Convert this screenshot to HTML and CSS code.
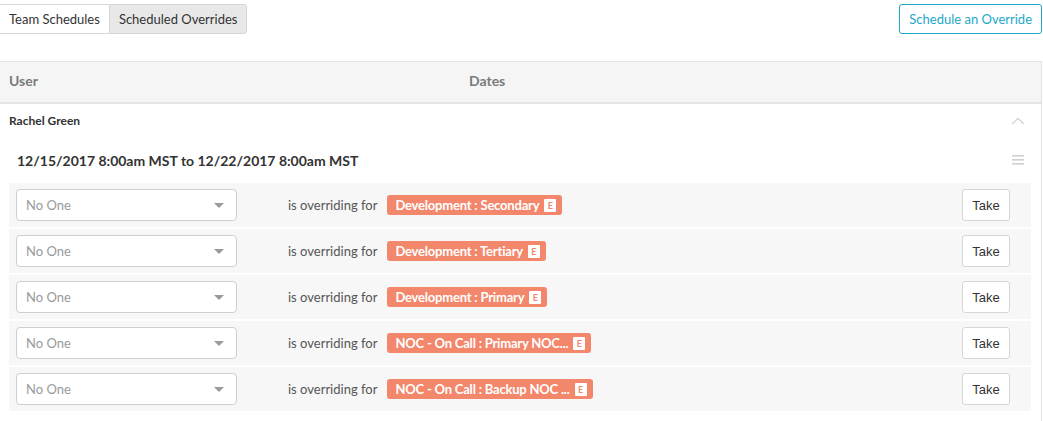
FILE: index.html
```html
<!DOCTYPE html>
<html lang="en">

<head>
    <meta charset="UTF-8">
    <meta name="viewport" content="width=device-width, initial-scale=1.0">
    <title>Scheduled Overrides</title>
    <link rel="stylesheet" href="styles.css">
</head>

<body>
    <div class="toolbar">
        <div class="tabs">
            <button class="tab">Team Schedules</button>
            <button class="tab active">Scheduled Overrides</button>
        </div>
        <button class="btn-outline">Schedule an Override</button>
    </div>

    <div class="panel">
        <div class="panel-head">
            <div class="col-user">User</div>
            <div class="col-dates">Dates</div>
        </div>

        <div class="user-row">
            <span class="user-name">Rachel Green</span>
            <svg class="chevron" width="14" height="8" viewBox="0 0 14 8">
                <path d="M1 7 L7 1.5 L13 7" fill="none" stroke="#d6d6d6" stroke-width="1.6"/>
            </svg>
        </div>

        <div class="range-row">
            <span class="range">12/15/2017 8:00am MST to 12/22/2017 8:00am MST</span>
            <svg class="menu" width="12" height="10" viewBox="0 0 12 10">
                <rect x="0" y="0" width="12" height="1.6" fill="#d0d0d0"/>
                <rect x="0" y="4" width="12" height="1.6" fill="#d0d0d0"/>
                <rect x="0" y="8" width="12" height="1.6" fill="#d0d0d0"/>
            </svg>
        </div>

        <ul class="overrides" id="overrides"></ul>
    </div>

    <script>
        const schedules = [
            'Development : Secondary',
            'Development : Tertiary',
            'Development : Primary',
            'NOC - On Call : Primary NOC...',
            'NOC - On Call : Backup NOC ...'
        ];
        const list = document.getElementById('overrides');
        for (let i = 0; i < schedules.length; i++) {
            const li = document.createElement('li');
            li.className = 'override';
            li.innerHTML =
                '<div class="select"><span>No One</span><span class="caret"></span></div>' +
                '<span class="label">is overriding for</span>' +
                '<span class="badge">' + schedules[i] + ' <span class="badge-e">E</span></span>' +
                '<button class="take">Take</button>';
            list.appendChild(li);
        }
    </script>
</body>

</html>
```

FILE: styles.css
```css
body {
    margin: 0;
    font-family: Lato, "Open Sans", sans-serif;
    background-color: #fff;
    color: #333;
}

button {
    font-family: inherit;
    cursor: pointer;
}

.toolbar {
    display: flex;
    justify-content: space-between;
    align-items: flex-start;
    padding: 4px 1px 0 0;
    height: 57px;
}

.tabs {
    display: flex;
}

.tab {
    height: 30px;
    padding: 0 9px;
    font-size: 13px;
    color: #333;
    background-color: #fff;
    border: 1px solid #d6d6d6;
    border-radius: 0;
}

.tab:first-child {
    border-left: none;
    border-right: none;
}

.tab.active {
    background-color: #e8e8e8;
    border-radius: 0 3px 3px 0;
}

.btn-outline {
    height: 30px;
    padding: 0 9px;
    font-size: 13px;
    color: #1ea7c9;
    background-color: #fff;
    border: 1px solid #1ea7c9;
    border-radius: 3px;
}

.panel {
    border-top: 1px solid #e3e3e3;
    border-right: 1px solid #e3e3e3;
    margin-right: 1px;
    padding-bottom: 12px;
}

.panel-head {
    display: flex;
    box-sizing: border-box;
    height: 42px;
    padding-bottom: 3px;
    align-items: center;
    background-color: #f5f5f5;
    border-bottom: 2px solid #e4e4e4;
    font-size: 14px;
    font-weight: bold;
    color: #7a7a7a;
}

.col-user {
    width: 460px;
    padding-left: 9px;
}

.user-row {
    display: flex;
    justify-content: space-between;
    align-items: center;
    height: 33px;
    padding: 0 16px 0 9px;
}

.user-name {
    font-size: 12px;
    font-weight: bold;
    color: #333;
}

.range-row {
    display: flex;
    justify-content: space-between;
    align-items: center;
    height: 46px;
    padding: 0 17px 0 17px;
}

.range {
    font-size: 14px;
    font-weight: bold;
    color: #333;
}

.overrides {
    list-style: none;
    margin: 0 10px 0 9px;
    padding: 0;
}

.override {
    display: flex;
    align-items: center;
    height: 44px;
    padding: 0 21px 0 7px;
    margin-bottom: 2px;
    background-color: #f7f7f7;
}

.select {
    display: flex;
    justify-content: space-between;
    align-items: center;
    box-sizing: border-box;
    width: 221px;
    height: 32px;
    padding: 0 9px;
    background-color: #fff;
    border: 1px solid #cfcfcf;
    border-radius: 4px;
    font-size: 13px;
    color: #9a9a9a;
}

.caret {
    width: 0;
    height: 0;
    border-left: 5px solid transparent;
    border-right: 5px solid transparent;
    border-top: 5px solid #9a9a9a;
    margin-right: 3px;
}

.label {
    margin-left: 51px;
    font-size: 13px;
    color: #555;
}

.badge {
    display: flex;
    align-items: center;
    gap: 5px;
    margin-left: 10px;
    height: 20px;
    padding: 0 6px 0 8px;
    background-color: #f3876c;
    border-radius: 3px;
    color: #fff;
    font-size: 13px;
    font-weight: bold;
    letter-spacing: -0.2px;
    white-space: nowrap;
}

.badge-e {
    display: inline-block;
    width: 12px;
    height: 13px;
    line-height: 13px;
    background-color: #fff;
    color: #f3876c;
    font-size: 9px;
    letter-spacing: 0;
    text-align: center;
    border-radius: 1px;
}

.take {
    margin-left: auto;
    height: 32px;
    width: 48px;
    font-family: "Liberation Sans", Arial, sans-serif;
    font-size: 13px;
    color: #333;
    background-color: #fff;
    border: 1px solid #d6d6d6;
    border-radius: 3px;
}
```
